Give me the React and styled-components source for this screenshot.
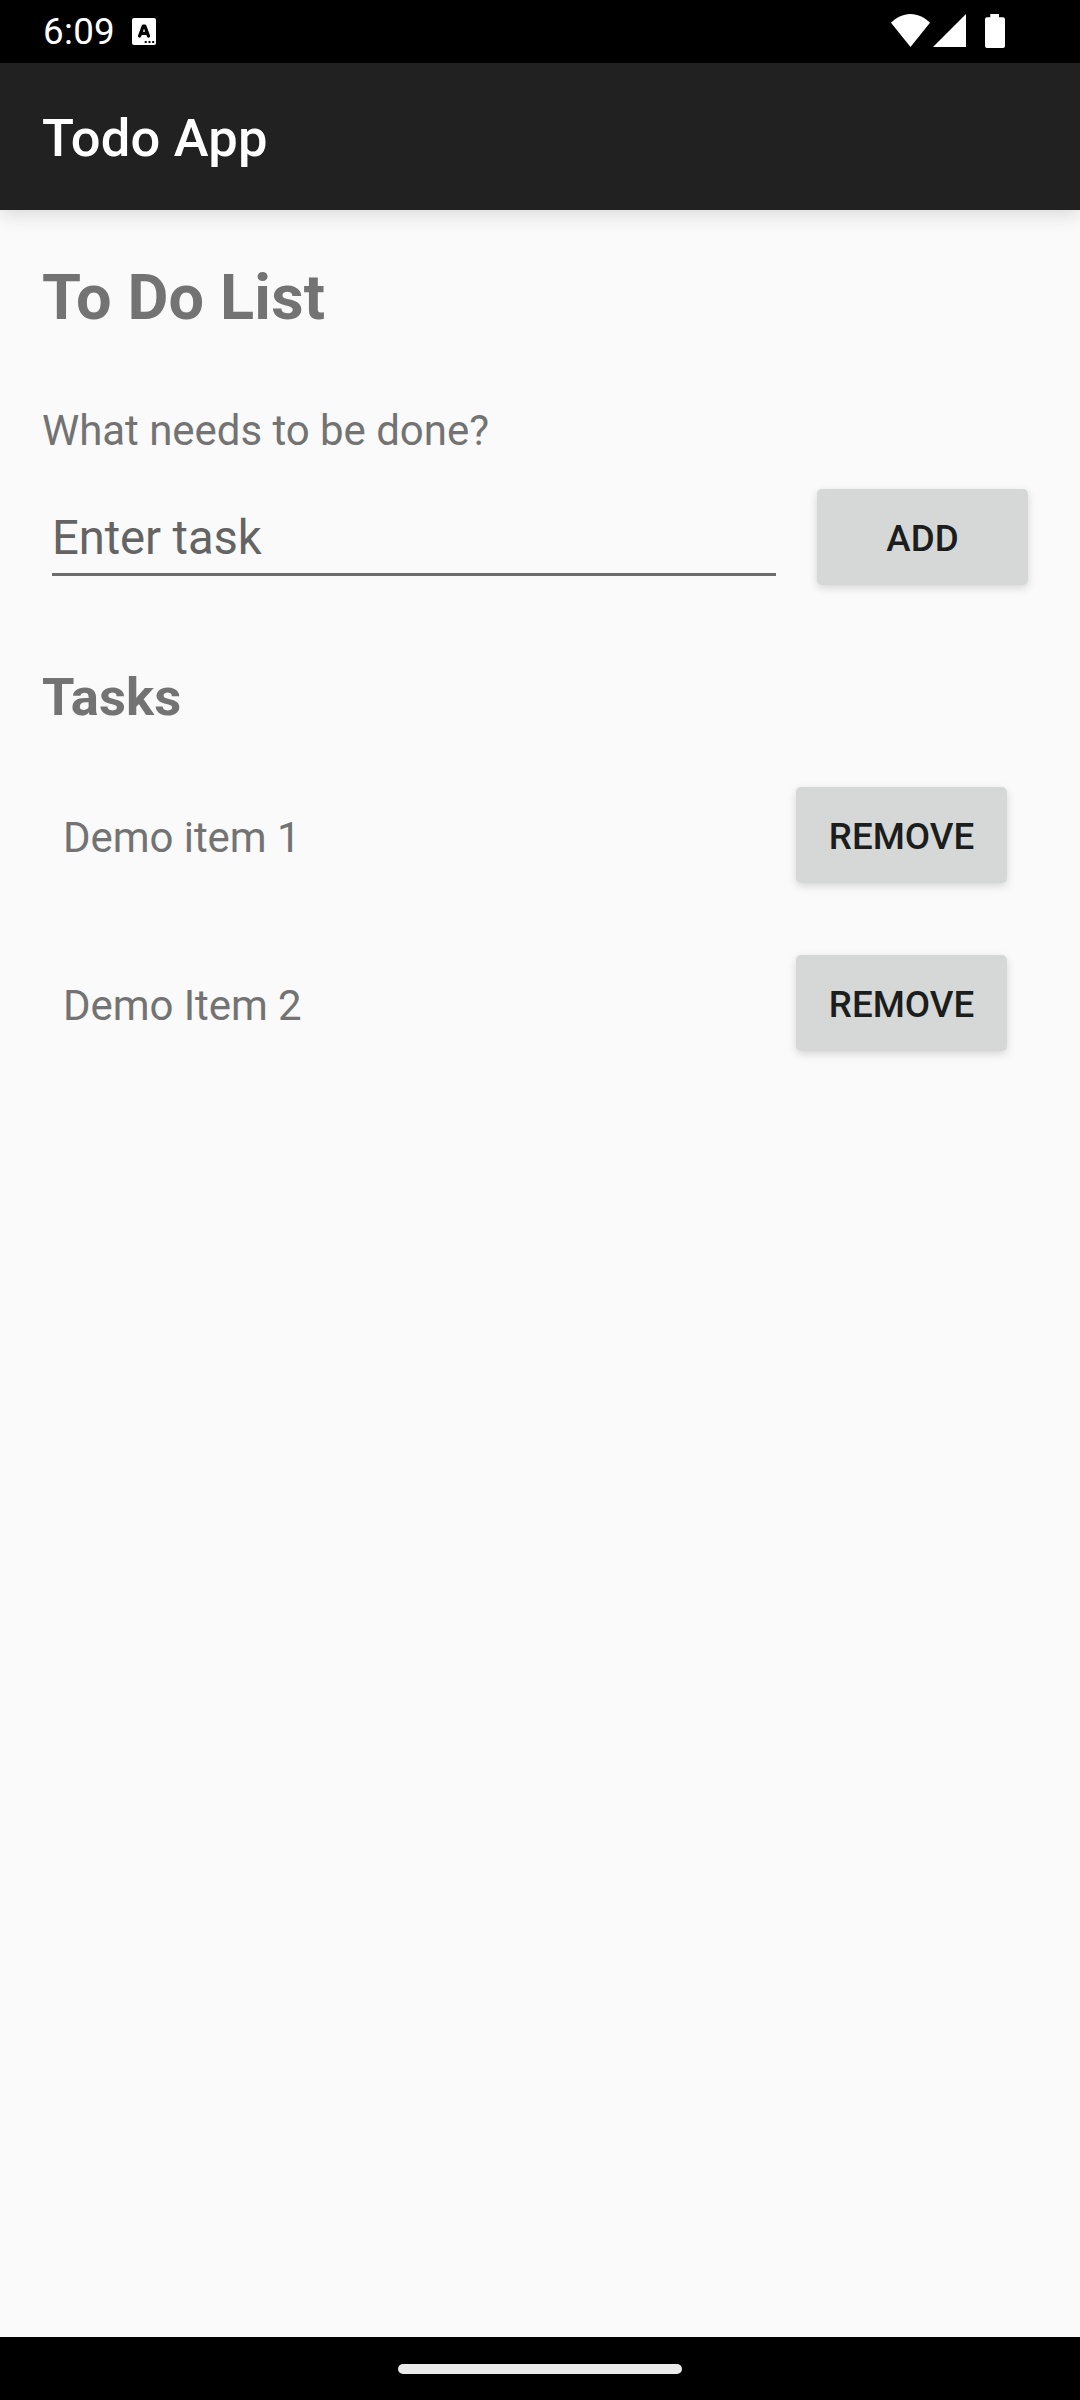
import React, { useState } from 'react';
import styled, { createGlobalStyle } from 'styled-components';

const GlobalStyle = createGlobalStyle`
  *, *::before, *::after { box-sizing: border-box; }
  body { margin: 0; background: #fafafa; }
`;

const Screen = styled.div`
  display: flex;
  flex-direction: column;
  width: 1080px;
  height: 2400px;
  overflow: hidden;
  background: #fafafa;
  color: #737373;
  font-family: Roboto, sans-serif;
`;

const StatusBar = styled.div`
  display: flex;
  flex: none;
  justify-content: space-between;
  height: 63px;
  padding: 0 75px 0 43px;
  background: #000;
  color: #fff;
`;

const StatusGroup = styled.div`
  display: flex;
  align-items: flex-start;
  padding-top: ${({ $top }) => $top}px;
`;

const Clock = styled.span`
  width: 89px;
  font-size: 36.75px;
  line-height: 44px;
  letter-spacing: 0.3px;
  margin-top: -8px;
  white-space: nowrap;
`;

const StatusIcon = styled.svg`
  display: block;
  flex: none;
  fill: #fff;
  margin-right: ${({ $gap = 0 }) => $gap}px;
`;

const AppBar = styled.header`
  display: flex;
  flex: none;
  align-items: center;
  height: 147px;
  padding: 3px 42px 0;
  background: #212121;
  box-shadow: 0 5px 18px rgba(0, 0, 0, 0.13);
`;

const AppTitle = styled.div`
  color: #fff;
  font-size: 52.5px;
  font-weight: 500;
  line-height: 62px;
  letter-spacing: 0.22px;
`;

const Content = styled.main`
  flex: 1;
  padding: 50px 52px 0 42px;
`;

const PageTitle = styled.h1`
  margin: 0;
  font-size: 63px;
  font-weight: 700;
  line-height: 75px;
  letter-spacing: 0.17px;
`;

const Prompt = styled.label`
  display: block;
  margin-top: 71px;
  font-size: 42px;
  line-height: 50px;
  letter-spacing: -0.04px;
`;

const EntryRow = styled.form`
  display: flex;
  align-items: flex-start;
  justify-content: space-between;
  margin: 33px 0 0 10px;
`;

const TaskInput = styled.input`
  width: 724px;
  height: 87px;
  padding: 21px 0 7px;
  border: 0;
  border-bottom: 3px solid #6d6d6d;
  border-radius: 0;
  outline: none;
  background: transparent;
  color: #212121;
  font-family: inherit;
  font-size: 47.25px;
  line-height: 56px;
  letter-spacing: -0.1px;

  &::placeholder {
    color: #646464;
    opacity: 1;
  }
`;

const Button = styled.button`
  flex: none;
  width: 211px;
  height: 96px;
  padding: 4px 0 0;
  border: 0;
  border-radius: 5px;
  background: #d6d8d7;
  box-shadow: 0 3px 8px rgba(0, 0, 0, 0.15);
  color: #1c1d1d;
  font-family: inherit;
  font-size: 36.75px;
  font-weight: 500;
  line-height: 44px;
  text-transform: uppercase;
`;

const SectionTitle = styled.h2`
  margin: 81px 0 0;
  font-size: 52.5px;
  font-weight: 700;
  line-height: 62px;
  letter-spacing: 0.1px;
`;

const TaskList = styled.ul`
  display: flex;
  flex-direction: column;
  gap: 72px;
  margin: 59px 0 0;
  padding: 0 21px;
  list-style: none;
`;

const TaskItem = styled.li`
  display: flex;
  align-items: center;
  justify-content: space-between;
`;

const TaskText = styled.span`
  padding-top: 5px;
  font-size: 42px;
  line-height: 50px;
  letter-spacing: -0.06px;
`;

const NavBar = styled.footer`
  display: flex;
  flex: none;
  justify-content: center;
  height: 63px;
  padding-top: 27px;
  background: #000;
`;

const HomeHandle = styled.div`
  width: 284px;
  height: 10px;
  border-radius: 5px;
  background: #ebebeb;
`;

export default function App() {
  const [tasks, setTasks] = useState(['Demo item 1', 'Demo Item 2']);
  const [draft, setDraft] = useState('');

  const addTask = (event) => {
    event.preventDefault();
    if (!draft.trim()) return;
    setTasks([...tasks, draft.trim()]);
    setDraft('');
  };

  return (
    <Screen>
      <GlobalStyle />
      <StatusBar>
        <StatusGroup $top={18}>
          <Clock>6:09</Clock>
          <StatusIcon width="24" height="27" viewBox="0 0 24 27">
            <rect width="24" height="27" rx="2" />
            <path d="M7.6 18 L11.2 8.2 H12.8 L16.5 18 M9 15.4 H15" fill="none" stroke="#000" strokeWidth="3.3" strokeLinecap="round" strokeLinejoin="round" />
            <path d="M12.7 23h2v2h-2z M16.5 23h2v2h-2z M20.2 23h2v2h-2z" fill="#000" />
          </StatusIcon>
        </StatusGroup>
        <StatusGroup $top={14}>
          <StatusIcon width="39" height="33" viewBox="0 0 39 33" $gap={3}>
            <path d="M19.5 33 L0 8.8 C5 3.5 12 0 19.5 0 S34 3.5 39 8.8 Z" />
          </StatusIcon>
          <StatusIcon width="33" height="33" viewBox="0 0 33 33" $gap={19}>
            <path d="M33 0 V33 H0 Z" />
          </StatusIcon>
          <StatusIcon width="20" height="34" viewBox="0 0 20 34">
            <path d="M5.3 0 H14 V3.3 H18 Q20 3.3 20 5.3 V32 Q20 34 18 34 H2 Q0 34 0 32 V5.3 Q0 3.3 2 3.3 H5.3 Z" />
          </StatusIcon>
        </StatusGroup>
      </StatusBar>
      <AppBar>
        <AppTitle>Todo App</AppTitle>
      </AppBar>
      <Content>
        <PageTitle>To Do List</PageTitle>
        <Prompt htmlFor="task">What needs to be done?</Prompt>
        <EntryRow onSubmit={addTask}>
          <TaskInput
            id="task"
            placeholder="Enter task"
            value={draft}
            onChange={(event) => setDraft(event.target.value)}
          />
          <Button type="submit">Add</Button>
        </EntryRow>
        <SectionTitle>Tasks</SectionTitle>
        <TaskList>
          {tasks.map((task, index) => (
            <TaskItem key={`${task}-${index}`}>
              <TaskText>{task}</TaskText>
              <Button type="button" onClick={() => setTasks(tasks.filter((_, i) => i !== index))}>
                Remove
              </Button>
            </TaskItem>
          ))}
        </TaskList>
      </Content>
      <NavBar>
        <HomeHandle />
      </NavBar>
    </Screen>
  );
}
